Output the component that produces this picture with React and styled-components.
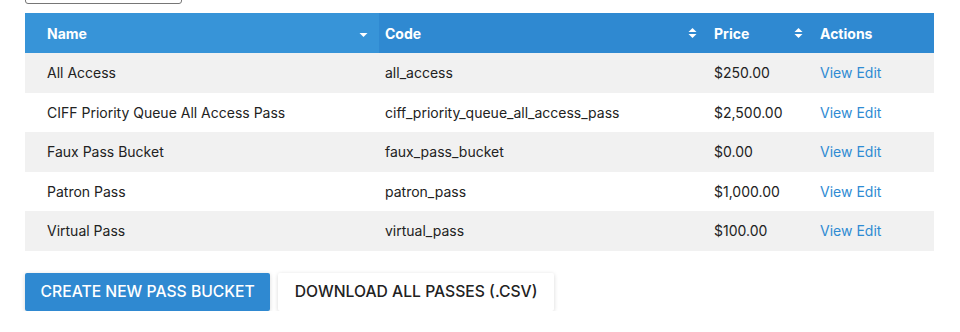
import styled, { createGlobalStyle } from "styled-components";

const GlobalStyle = createGlobalStyle`
  body {
    margin: 0;
    background: #fff;
    font-family: Inter, "Noto Sans", sans-serif;
    color: #222;
  }
`;

const Page = styled.div`
  padding: 0 26px 0 25px;
  margin-top: -27px;
`;

const Search = styled.input`
  display: block;
  box-sizing: border-box;
  width: 157px;
  height: 31px;
  border: 1.5px solid #767676;
  border-radius: 3px;
  margin-bottom: 9px;
  background: #fff;
`;

const Table = styled.table`
  width: 909px;
  border-collapse: collapse;
  table-layout: fixed;
  font-size: 14px;
`;

const Th = styled.th`
  position: relative;
  height: 40px;
  padding: 0 0 0 ${(p) => (p.$first ? "22px" : "6px")};
  text-align: left;
  font-weight: 700;
  color: #fff;
  background: ${(p) => (p.$sorted ? "#3794d8" : "#2f89d1")};
`;

const SortIcon = styled.svg`
  position: absolute;
  right: 11px;
  top: 50%;
  transform: translateY(-50%);
`;

const Row = styled.tr`
  background: ${(p) => (p.$odd ? "#f1f1f1" : "#fff")};
`;

const Td = styled.td`
  height: 39.5px;
  padding: 0 0 0 ${(p) => (p.$first ? "22px" : "6px")};
  color: #222;
`;

const ActionLink = styled.a`
  color: #2f8bd3;
  text-decoration: none;
  margin-right: 4px;
  cursor: pointer;
`;

const Buttons = styled.div`
  display: flex;
  gap: 8px;
  margin-top: 22px;
`;

const Button = styled.button`
  height: 38px;
  padding: 0 ${(p) => (p.$primary ? "15.5px" : "16.5px")};
  border: none;
  border-radius: 2px;
  font-family: Inter, "Noto Sans", sans-serif;
  font-size: 15.7px;
  font-weight: 500;
  color: ${(p) => (p.$primary ? "#fff" : "#222")};
  background: ${(p) => (p.$primary ? "#2f89d1" : "#fff")};
  box-shadow: 0 1px 4px rgba(0, 0, 0, 0.16);
  cursor: pointer;
`;

const passes = [
  { name: "All Access", code: "all_access", price: "$250.00" },
  {
    name: "CIFF Priority Queue All Access Pass",
    code: "ciff_priority_queue_all_access_pass",
    price: "$2,500.00",
  },
  { name: "Faux Pass Bucket", code: "faux_pass_bucket", price: "$0.00" },
  { name: "Patron Pass", code: "patron_pass", price: "$1,000.00" },
  { name: "Virtual Pass", code: "virtual_pass", price: "$100.00" },
];

const Caret = ({ both }) => (
  <SortIcon width="9" height="10" viewBox="0 0 9 10">
    {both && <path d="M0.5 4 L4.5 0 L8.5 4 Z" fill="#fff" />}
    <path d={both ? "M0.5 6 L4.5 10 L8.5 6 Z" : "M0.5 5 L4.5 9 L8.5 5 Z"} fill="#fff" />
  </SortIcon>
);

const App = () => {
  return (
    <>
      <GlobalStyle />
      <Page>
        <Search type="text" />
        <Table>
          <colgroup>
            <col style={{ width: 354 }} />
            <col style={{ width: 329 }} />
            <col style={{ width: 106 }} />
            <col style={{ width: 120 }} />
          </colgroup>
          <thead>
            <tr>
              <Th $first $sorted>
                Name
                <Caret />
              </Th>
              <Th>
                Code
                <Caret both />
              </Th>
              <Th>
                Price
                <Caret both />
              </Th>
              <Th>Actions</Th>
            </tr>
          </thead>
          <tbody>
            {passes.map((p, i) => (
              <Row key={p.code} $odd={i % 2 === 0}>
                <Td $first>{p.name}</Td>
                <Td>{p.code}</Td>
                <Td>{p.price}</Td>
                <Td>
                  <ActionLink>View</ActionLink>
                  <ActionLink>Edit</ActionLink>
                </Td>
              </Row>
            ))}
          </tbody>
        </Table>
        <Buttons>
          <Button $primary>CREATE NEW PASS BUCKET</Button>
          <Button>DOWNLOAD ALL PASSES (.CSV)</Button>
        </Buttons>
      </Page>
    </>
  );
};

export default App;
